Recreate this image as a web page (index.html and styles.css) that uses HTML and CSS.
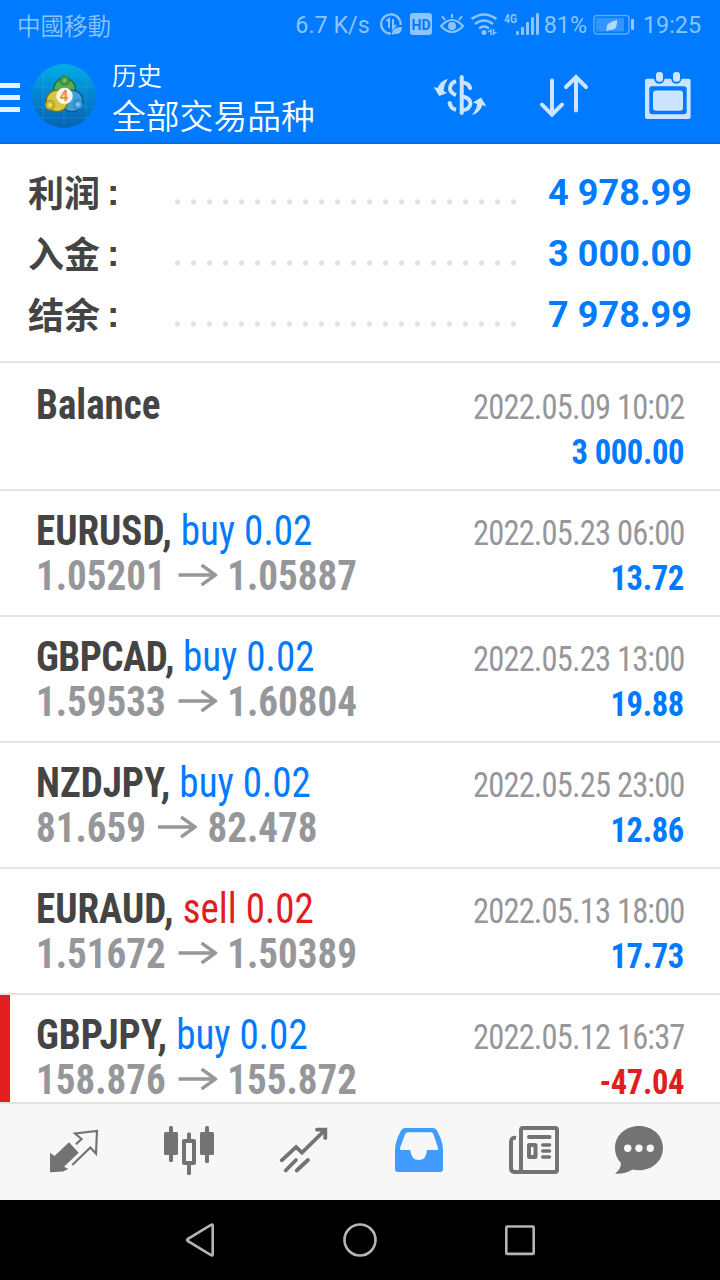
FILE: index.html
```html
<!DOCTYPE html>
<html lang="zh-CN">
<head>
    <meta charset="UTF-8">
    <meta name="viewport" content="width=device-width, initial-scale=1.0">
    <title>历史</title>
    <link rel="stylesheet" href="styles.css">
</head>
<body>
    <div class="app">
        <!-- Status bar -->
        <div class="status-bar">
            <span class="carrier">中國移動</span>
            <span class="speed">6.7 K/s</span>
            <svg class="status-icons" width="162" height="30" viewBox="378 10 162 30">
                <g fill="none" stroke="currentColor" stroke-width="2.2">
                    <path d="M400.500 25A9.700 9.700 0 1 0 391 33.700"/>
                    <path d="M386.500 21l2.500-2v9M393 19v9l3-3" stroke-width="2"/>
                    <path d="M441 26q11-12 22 0q-11 12-22 0zM452 18v-4M445 20l-3-4M459 20l3-4" stroke-width="2"/>
                    <path d="M471.500 19q12.500-9 25 0M475 24q9-7 18 0M479 28.500q5-4 10 0" stroke-width="2.400"/>
                    <path d="M488 32l3-2v5M493.500 29v5l3-2" stroke-width="1.500"/>
                </g>
                <g fill="currentColor">
                    <path d="M392 34q0-7 10-7q0 8-8 7l-2 1z"/>
                    <rect x="410" y="13" width="22" height="22" rx="3"/>
                    <circle cx="452" cy="26" r="4"/>
                    <circle cx="484" cy="32.500" r="2.500"/>
                    <rect x="516" y="31" width="3" height="4" rx="1"/>
                    <rect x="521" y="27" width="3" height="8" rx="1"/>
                    <rect x="526" y="22" width="3" height="13" rx="1"/>
                    <rect x="531" y="17" width="3" height="18" rx="1"/>
                    <rect x="536" y="13" width="3" height="22" rx="1"/>
                </g>
                <text class="hd" x="421" y="29.500" text-anchor="middle">HD</text>
                <text class="net" x="504" y="22.500" textLength="13" lengthAdjust="spacingAndGlyphs">4G</text>
            </svg>
            <span class="percent">81%</span>
            <svg class="battery" width="42" height="22" viewBox="0 0 42 22">
                <rect x="1" y="1.500" width="35" height="18.500" rx="3" fill="none" stroke="#59a9ff" stroke-width="1.500"/>
                <rect x="3" y="4" width="28" height="13.500" fill="#3395ff"/>
                <path d="M13.500 16q-1-8 10.500-10q1 11-8 10l-2.500 1.500z" fill="#b3d7ff"/>
                <rect x="38" y="5" width="3" height="11" rx="1" fill="#99caff"/>
            </svg>
            <span class="clock">19:25</span>
        </div>

        <!-- Header -->
        <div class="header">
            <div class="menu">
                <span></span>
                <span></span>
                <span></span>
            </div>
            <svg class="logo" width="64" height="64" viewBox="0 0 64 64">
                <defs>
                    <linearGradient id="disc" x1="0" y1="0" x2="0" y2="1">
                        <stop offset="0" stop-color="#00afe6"/>
                        <stop offset=".5" stop-color="#0383cf"/>
                        <stop offset="1" stop-color="#0563b3"/>
                    </linearGradient>
                    <radialGradient id="green"><stop offset="0" stop-color="#8acb68"/><stop offset="1" stop-color="#1f7d34"/></radialGradient>
                    <radialGradient id="yellow"><stop offset="0" stop-color="#fff06a"/><stop offset="1" stop-color="#a3921a"/></radialGradient>
                    <radialGradient id="blue"><stop offset="0" stop-color="#8fd4fa"/><stop offset="1" stop-color="#1579bf"/></radialGradient>
                </defs>
                <circle cx="32" cy="32" r="32" fill="url(#disc)"/>
                <path d="M11 9v46M32 0v64M54 9v46M7 12h50M1 23h62M0 43h62M7 54h50" stroke="#3fb0e6" stroke-opacity=".3" fill="none"/>
                <circle cx="32.500" cy="25" r="10.800" fill="#58ab4e" stroke="#176c38" stroke-width="1.200"/>
                <circle cx="40" cy="37" r="10.800" fill="#3d9fd8" stroke="#115486" stroke-width="1.200"/>
                <circle cx="25" cy="37" r="10.800" fill="#d5c540" stroke="#736c1b" stroke-width="1.200"/>
                <circle cx="32.500" cy="16.500" r="5" fill="url(#green)"/>
                <circle cx="18" cy="41" r="5" fill="url(#yellow)"/>
                <circle cx="46" cy="40.500" r="5" fill="url(#blue)"/>
                <circle cx="32.500" cy="32" r="8.300" fill="#f6f2ee"/>
                <text class="logo-text" x="32" y="37.300" text-anchor="middle">4</text>
            </svg>
            <div class="titles">
                <div class="title">历史</div>
                <div class="subtitle">全部交易品种</div>
            </div>
            <div class="actions">
                <svg width="60" height="60" viewBox="0 0 60 60">
                    <path d="M31.700 11v36M26 15.200q-6 2.300-6 7.300q0 4 6 6.700M33 16.500q6.500 1 7 6M33 30.500q7.500 2 7.500 7q-1 6-7.500 6.500M19.500 36.500q1 6 6.500 7.300" fill="none" stroke="currentColor" stroke-width="4"/>
                    <circle cx="31.700" cy="11" r="2" fill="currentColor"/>
                    <circle cx="31.700" cy="47" r="2" fill="currentColor"/>
                    <circle cx="40.200" cy="22" r="2" fill="currentColor"/>
                    <circle cx="19.700" cy="37" r="2" fill="currentColor"/>
                    <path d="M18 13q-7 1-10.500 9l-3.800-1l5.500 9l8-3l-3.500-2q0-6 4.300-12zM42 49q5-6 5-11l-4-1.500l8-5l5.500 9l-4-1.500q-3 8-10.500 10z" fill="currentColor"/>
                </svg>
                <svg width="60" height="60" viewBox="0 0 60 60">
                    <path d="M18 14.500V48M8 38.700l10 10l10-10M42 44.500V11M32 21l10-10l10 10" fill="none" stroke="currentColor" stroke-width="4" stroke-linecap="round"/>
                </svg>
                <svg width="60" height="60" viewBox="0 0 60 60">
                    <path fill="currentColor" fill-rule="evenodd" d="M9 12.700h7q1 5 5.300 5t5.300-5h6.400q1 5 5.300 5t5.300-5h7q2 0 2 2v36.300q0 2-2 2H9q-2 0-2-2V14.700q0-2 2-2zM14 20.300q-2.700 0-2.700 2.700v22.600q0 2.700 2.700 2.700h32q2.700 0 2.700-2.700V23q0-2.700-2.700-2.700z"/>
                    <rect x="15" y="24.500" width="30" height="20.300" rx="3" fill="currentColor"/>
                    <rect x="18" y="6" width="7" height="9.700" rx="3" fill="currentColor"/>
                    <rect x="35" y="6" width="7" height="9.700" rx="3" fill="currentColor"/>
                </svg>
            </div>
        </div>

        <!-- Summary -->
        <div class="summary">
            <div class="summary-row">
                <span class="label">利润</span><span class="colon">:</span>
                <span class="dots"></span>
                <span class="total">4 978.99</span>
            </div>
            <div class="summary-row">
                <span class="label">入金</span><span class="colon">:</span>
                <span class="dots"></span>
                <span class="total">3 000.00</span>
            </div>
            <div class="summary-row">
                <span class="label">结余</span><span class="colon">:</span>
                <span class="dots"></span>
                <span class="total">7 978.99</span>
            </div>
        </div>

        <!-- Deals -->
        <div class="deals">
            <div class="deal balance">
                <div class="line"><span class="name"><b>Balance</b></span><span class="date">2022.05.09 10:02</span></div>
                <div class="line"><span class="price">&nbsp;</span><span class="amount">3 000.00</span></div>
            </div>
            <div class="deal">
                <div class="line"><span class="name"><b>EURUSD,</b> <span class="buy">buy 0.02</span></span><span class="date">2022.05.23 06:00</span></div>
                <div class="line"><span class="price">1.05201<svg class="arrow" viewBox="0 0 42 22"><path d="M0 11H40M25 1L40 11L25 21"/></svg>1.05887</span><span class="amount">13.72</span></div>
            </div>
            <div class="deal">
                <div class="line"><span class="name"><b class="tight">GBPCAD,</b> <span class="buy">buy 0.02</span></span><span class="date">2022.05.23 13:00</span></div>
                <div class="line"><span class="price">1.59533<svg class="arrow" viewBox="0 0 42 22"><path d="M0 11H40M25 1L40 11L25 21"/></svg>1.60804</span><span class="amount">19.88</span></div>
            </div>
            <div class="deal">
                <div class="line"><span class="name"><b>NZDJPY,</b> <span class="buy">buy 0.02</span></span><span class="date">2022.05.25 23:00</span></div>
                <div class="line"><span class="price">81.659<svg class="arrow" viewBox="0 0 42 22"><path d="M0 11H40M25 1L40 11L25 21"/></svg>82.478</span><span class="amount">12.86</span></div>
            </div>
            <div class="deal">
                <div class="line"><span class="name"><b>EURAUD,</b> <span class="sell">sell 0.02</span></span><span class="date">2022.05.13 18:00</span></div>
                <div class="line"><span class="price">1.51672<svg class="arrow" viewBox="0 0 42 22"><path d="M0 11H40M25 1L40 11L25 21"/></svg>1.50389</span><span class="amount">17.73</span></div>
            </div>
            <div class="deal loss">
                <div class="line"><span class="name"><b>GBPJPY,</b> <span class="buy">buy 0.02</span></span><span class="date">2022.05.12 16:37</span></div>
                <div class="line"><span class="price">158.876<svg class="arrow" viewBox="0 0 42 22"><path d="M0 11H40M25 1L40 11L25 21"/></svg>155.872</span><span class="amount">-47.04</span></div>
            </div>
        </div>

        <!-- Bottom tabs -->
        <div class="tabs">
            <svg viewBox="0 0 60 60">
                <path d="M6 32.700L10.500 36L25 22.300L34.700 32.700L20 46.700L24.300 49L19 51.500L6 52.300z" fill="currentColor"/>
                <path d="M32 24.300L37.500 19L31 13.500L53 11L52 33.500L46.300 27.500L28.300 45" fill="none" stroke="currentColor" stroke-width="2.200"/>
            </svg>
            <svg viewBox="0 0 60 60" fill="currentColor">
                <rect x="5" y="12" width="14" height="23" rx="1.500"/>
                <rect x="10" y="6" width="4" height="36" rx="1.500"/>
                <rect x="41" y="12" width="14" height="23" rx="1.500"/>
                <rect x="46" y="6" width="4" height="37" rx="1.500"/>
                <rect x="28" y="12.500" width="4" height="8" rx="1.500"/>
                <rect x="28" y="43" width="4" height="12" rx="1.500"/>
                <rect x="25" y="21" width="10" height="22" fill="none" stroke="currentColor" stroke-width="4" stroke-linejoin="round"/>
            </svg>
            <svg viewBox="0 0 60 60">
                <path d="M7.700 40.300L22 27L28 32.700L51 10M43 9.700H51.300V18M11.700 50.500L22 40M22.700 50.500L34 40" fill="none" stroke="currentColor" stroke-width="3.800" stroke-linecap="round"/>
            </svg>
            <svg class="active" viewBox="0 0 60 60">
                <path fill="currentColor" fill-rule="evenodd" d="M16 8H44Q47 8 48.500 11.500Q54 22 54 30V49Q54 52 51 52H9Q6 52 6 49V30Q6 22 11.500 11.500Q13 8 16 8zM19 12.300Q17 12.300 16 14.500L11 28Q10.500 30 12 30H21.300Q22 40 29.700 40T38 30H48Q49.700 30 49 28L44.500 14.500Q43.500 12.300 42 12.300z"/>
            </svg>
            <svg viewBox="0 0 60 60" fill="none" stroke="currentColor" stroke-width="4" stroke-linecap="round">
                <rect x="17" y="8" width="36" height="44" rx="2"/>
                <path d="M12 18Q7 17 7 22V48Q7 52 11 52H17" stroke-linecap="butt"/>
                <path d="M25 17H45.500"/>
                <path d="M38.800 25H45.500M38.800 31H45.500M38.800 37H45.500" stroke-width="3.600"/>
                <rect x="25" y="25" width="6.500" height="12" rx=".5"/>
            </svg>
            <svg class="chat" viewBox="0 0 60 60">
                <path d="M30 6C43.500 6 54 15.500 54 28S43.500 50.300 30 50.300Q26 50.300 23.500 49.500Q15 54.500 6 53.700Q12 49 12 43Q6 37 6 28C6 15.500 16.500 6 30 6z" fill="currentColor"/>
                <g fill="#f7f7f7">
                    <circle cx="18.700" cy="28.300" r="3.700"/>
                    <circle cx="30" cy="28.300" r="3.700"/>
                    <circle cx="41.300" cy="28.300" r="3.700"/>
                </g>
            </svg>
        </div>

        <!-- System navigation -->
        <div class="system-nav">
            <svg viewBox="0 0 40 40"><path d="M31 4.800Q32.700 3.900 32.700 6V34Q32.700 36.100 31 35.200L8 21.200Q6.500 20 8 18.800z"/></svg>
            <svg viewBox="0 0 40 40"><circle cx="20" cy="20" r="15.500"/></svg>
            <svg viewBox="0 0 40 40"><rect x="6.300" y="6.500" width="27.400" height="27.400" rx="1"/></svg>
        </div>
    </div>
</body>
</html>
```
FILE: styles.css
```css
* {
    box-sizing: border-box;
}
body {
    margin: 0;
    font-family: Roboto, "Noto Sans CJK SC", sans-serif;
    background-color: #fff;
}
svg {
    display: block;
    flex: none;
}
.app {
    width: 720px;
    height: 1280px;
    display: flex;
    flex-direction: column;
    overflow: hidden;
}

/* Status bar */
.status-bar {
    height: 50px;
    display: flex;
    align-items: center;
    padding: 0 19px 0 17px;
    background-color: #007aff;
    color: #8cc4ff;
    font-size: 23.3px;
    white-space: nowrap;
}
.carrier {
    font-family: "Noto Sans CJK TC", sans-serif;
    font-size: 23.5px;
    font-weight: 350;
    margin-right: auto;
}
.status-icons {
    margin: 0 4px 0 8px;
}
.hd {
    font-size: 14px;
    font-weight: 700;
    fill: #007aff;
}
.net {
    font-size: 13px;
    font-weight: 700;
    fill: currentColor;
}
.battery {
    margin: 0 8px 0 6px;
}

/* Header */
.header {
    height: 94px;
    display: flex;
    align-items: center;
    padding-right: 22px;
    background-color: #007aff;
    border-bottom: 2px solid #006fe0;
    color: #fff;
}
.menu {
    display: flex;
    flex-direction: column;
    gap: 7px;
    width: 20px;
    margin-top: 3px;
}
.menu span {
    height: 5px;
    background-color: #e6f2ff;
}
.logo {
    margin: 0 16px 0 12px;
}
.logo-text {
    font-size: 15px;
    font-weight: 700;
    fill: #f28c3c;
}
.titles {
    padding-top: 1px;
    font-family: "Noto Sans CJK SC", sans-serif;
    font-weight: 350;
}
.title {
    font-size: 25px;
    line-height: 36px;
}
.subtitle {
    font-size: 33.800px;
    line-height: 46px;
}
.actions {
    display: flex;
    gap: 44px;
    margin-left: auto;
    color: #cce4ff;
}

/* Summary */
.summary {
    padding: 18px 28px 16px;
    border-bottom: 2px solid #e3e3e3;
    font-size: 36px;
    font-weight: 700;
    line-height: 61px;
}
.summary-row {
    display: flex;
    align-items: baseline;
    height: 61px;
    color: #444;
}
.label {
    width: 79px;
    transform: translateY(2px);
}
.colon {
    width: 65px;
    font-family: "Liberation Sans", sans-serif;
    font-size: 37px;
}
.dots {
    flex: none;
    width: 348px;
    height: 8px;
    background: radial-gradient(circle at 5.500px 4px, #e2e2e2 2.300px, transparent 3px) 0 0 / 16px 8px repeat-x;
    transform: translateY(1px);
}
.total {
    margin-left: auto;
    letter-spacing: 0.1px;
    color: #007aff;
}

/* Deals */
.deals {
    flex: 1;
    min-height: 0;
    overflow: hidden;
    font-family: "Roboto Condensed", Roboto, sans-serif;
    font-stretch: 75%;
}
.deal {
    height: 126px;
    padding: 17px 36px 0 36px;
    border-bottom: 2px solid #e3e3e3;
}
.deal.balance {
    height: 128px;
    padding-top: 19px;
}
.deal.loss {
    padding-left: 26px;
    border-left: 10px solid #e41e1e;
}
.line {
    display: flex;
    justify-content: space-between;
    align-items: baseline;
    height: 45px;
    line-height: 45px;
    white-space: nowrap;
}
/* Narrower than the condensed face itself */
.name,
.price {
    transform: scaleX(0.93);
    transform-origin: left;
}
.date,
.amount {
    transform: scaleX(0.93);
    transform-origin: right;
}
.name {
    font-size: 42px;
    color: #444;
}
.tight {
    letter-spacing: -0.6px;
}
.buy {
    color: #007aff;
}
.sell {
    color: #e01e1e;
}
.price {
    display: flex;
    align-items: baseline;
    font-size: 42px;
    font-weight: 700;
    color: #96979b;
}
.arrow {
    width: 42px;
    height: 22px;
    margin: 0 11px 0 13px;
    transform: translateY(-4px);
    fill: none;
    stroke: #96979b;
    stroke-width: 3.500;
}
.date {
    margin-right: -1px;
    font-size: 35px;
    letter-spacing: -0.9px;
    color: #96979b;
}
.amount {
    font-size: 35px;
    font-weight: 700;
    letter-spacing: -0.4px;
    color: #007aff;
}
.loss .amount {
    color: #e01e1e;
}

/* Bottom tabs */
.tabs {
    height: 98px;
    display: flex;
    gap: 55px;
    padding: 16px 0 0 44px;
    border-top: 2px solid #e3e3e3;
    background-color: #f7f7f7;
    color: #737373;
}
.tabs svg {
    width: 60px;
    height: 60px;
}
.tabs .active {
    color: #429bff;
}
.tabs .chat {
    margin-left: -10px;
}

/* System navigation */
.system-nav {
    height: 80px;
    display: flex;
    justify-content: center;
    align-items: center;
    gap: 120px;
    background-color: #000;
}
.system-nav svg {
    width: 40px;
    height: 40px;
    fill: none;
    stroke: #b5b5b5;
    stroke-width: 2.600;
}
```
